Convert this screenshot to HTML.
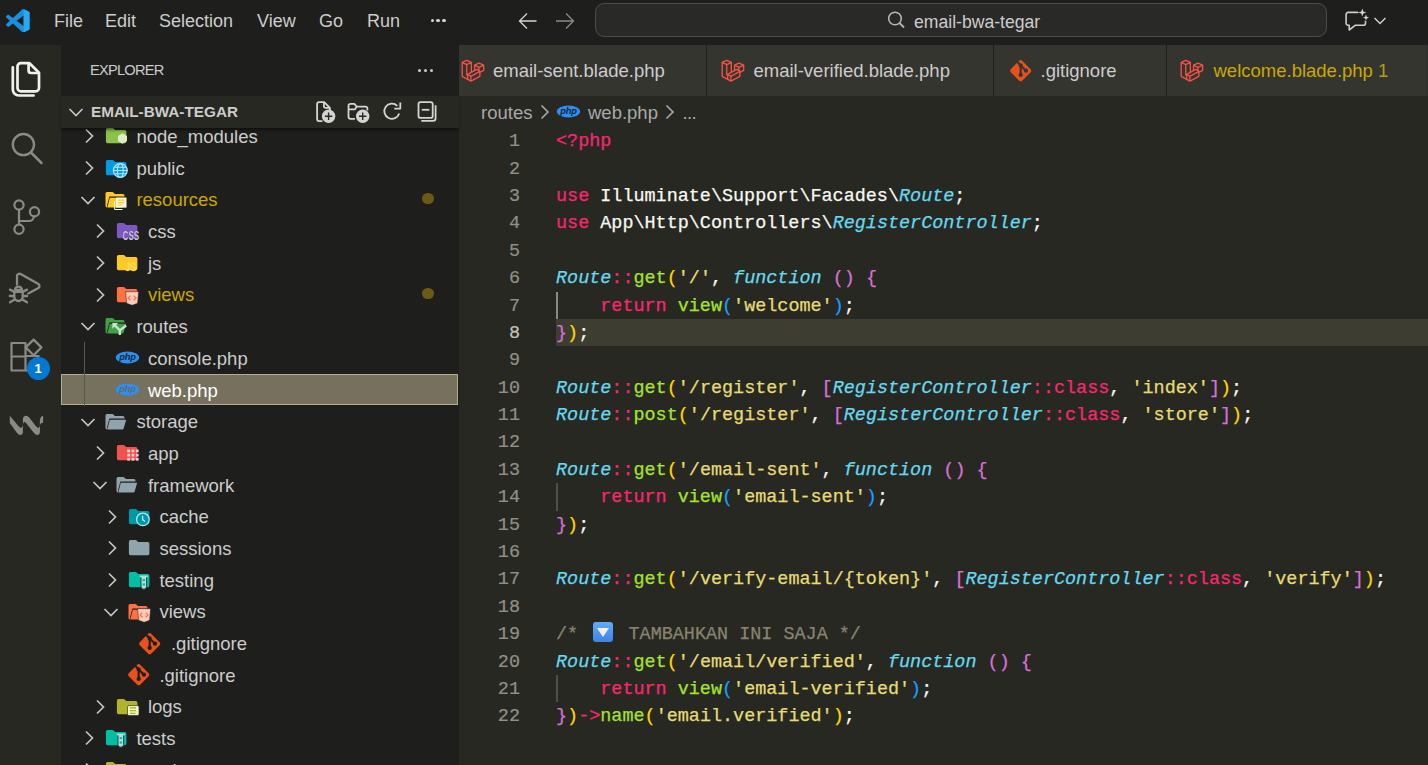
<!DOCTYPE html><html><head><meta charset="utf-8"><style>
*{margin:0;padding:0;box-sizing:border-box}
html,body{width:1428px;height:765px;overflow:hidden;background:#272822;font-family:"Liberation Sans",sans-serif;position:relative}
.abs{position:absolute}
.t{position:absolute;white-space:nowrap}
.menu{position:absolute;top:0;height:45px;line-height:43px;font-size:18px;color:#cccccc;white-space:nowrap}
.ln{position:absolute;left:459px;width:61px;height:27.38px;line-height:27.38px;padding-top:1px;text-align:right;font-family:"Liberation Mono",monospace;font-size:18.46px;color:#90908a;-webkit-text-stroke:0.2px}
.cl{position:absolute;left:556px;height:27.38px;line-height:27.38px;padding-top:1px;font-family:"Liberation Mono",monospace;font-size:18.46px;color:#f8f8f2;white-space:pre;-webkit-text-stroke:0.25px}
.k{color:#f92672}.f{color:#a6e22e}.s{color:#e6db74}.c{color:#66d9ef;font-style:italic}.cm{color:#88846f}
.b1{color:#ffd700}.b2{color:#da70d6}.b3{color:#179fff}
.act{color:#c2c2bf}
.row{position:absolute;height:31.68px;line-height:31.68px;font-size:18.5px;color:#cccccc;white-space:nowrap}
.tabt{position:absolute;top:45px;height:51px;line-height:51px;font-size:18.5px;color:#cccccc;white-space:nowrap}
.emo{display:inline-block;width:20.6px;height:20px;margin:0 4.3px 0 3.4px;background:linear-gradient(#62acf6,#3d84e4);border-radius:3px;vertical-align:-3px;position:relative}.emo:after{content:'';position:absolute;left:4.3px;top:6px;border-left:6px solid transparent;border-right:6px solid transparent;border-top:9px solid #f4eefc}
</style></head><body>
<div class="abs" style="left:0;top:0;width:1428px;height:45px;background:#1e1f1c"></div>
<div class="abs" style="left:0;top:45px;width:61px;height:720px;background:#272822"></div>
<div class="abs" style="left:61px;top:45px;width:398px;height:720px;background:#1e1f1c"></div>
<div class="abs" style="left:459px;top:45px;width:969px;height:51px;background:#34352f"></div>
<svg class="abs" style="left:6px;top:8.5px" width="23.5" height="23.5" viewBox="0 0 100 100"><path d="M70.9 99.3C72.5 99.9 74.3 99.9 75.9 99.1L96.5 89.2C98.6 88.2 100 86 100 83.6V16.4C100 14 98.6 11.8 96.5 10.8L75.9 0.9C73.8 -0.1 71.3 0.1 69.5 1.4C69.3 1.6 69 1.8 68.8 2.1L29.4 38L12.2 25C10.6 23.8 8.4 23.9 6.9 25.2L1.4 30.3C-0.5 31.9 -0.5 34.8 1.4 36.4L16.2 50L1.4 63.6C-0.5 65.2 -0.5 68.1 1.4 69.7L6.9 74.8C8.4 76.1 10.6 76.2 12.2 75L29.4 62L68.8 97.9C69.4 98.5 70.1 99 70.9 99.3ZM75 27.3L45.1 50L75 72.7V27.3Z" fill="#1a8fe0" fill-rule="evenodd"/><path d="M75.9 0.9L96.5 10.8C98.6 11.8 100 14 100 16.4V83.6C100 86 98.6 88.2 96.5 89.2L75.9 99.1C74.3 99.9 72.5 99.9 70.9 99.3L75 95V5Z" fill="#27a9f3"/></svg>
<span class="menu" style="left:54px">File</span>
<span class="menu" style="left:105px">Edit</span>
<span class="menu" style="left:159px">Selection</span>
<span class="menu" style="left:257px">View</span>
<span class="menu" style="left:319px">Go</span>
<span class="menu" style="left:367px">Run</span>
<div class="abs" style="left:430.5px;top:18.5px;width:16px;height:4px"><span class="abs" style="left:0.0px;top:0;width:3.4px;height:3.4px;border-radius:2px;background:#d4d4d4"></span><span class="abs" style="left:5.9px;top:0;width:3.4px;height:3.4px;border-radius:2px;background:#d4d4d4"></span><span class="abs" style="left:11.8px;top:0;width:3.4px;height:3.4px;border-radius:2px;background:#d4d4d4"></span></div>
<svg class="abs" style="left:518.00px;top:10.50px;overflow:visible" width="20" height="20" viewBox="0 0 20 20"><path d="M1.5 10 H18.5 M9 2.5 L1.5 10 L9 17.5" fill="none" stroke="#d4d4d4" stroke-width="1.3"/></svg>
<svg class="abs" style="left:555.00px;top:10.50px;overflow:visible" width="20" height="20" viewBox="0 0 20 20"><path d="M1 10 H18.5 M11 2.5 L18.5 10 L11 17.5" fill="none" stroke="#8a8a8a" stroke-width="1.3"/></svg>
<div class="abs" style="left:595px;top:3px;width:732px;height:34px;border:1px solid #4b4b48;border-radius:9px;background:#292927"></div>
<svg class="abs" style="left:886.00px;top:10.00px;overflow:visible" width="20" height="20" viewBox="0 0 20 20"><circle cx="9" cy="8.5" r="6.3" fill="none" stroke="#b5b5b5" stroke-width="1.6"/><path d="M13.5 13 L18 17.5" stroke="#b5b5b5" stroke-width="1.8"/></svg>
<span class="menu" style="left:914px;font-size:17.6px;line-height:45px">email-bwa-tegar</span>
<svg class="abs" style="left:1344.00px;top:8.00px;overflow:visible" width="28" height="26" viewBox="0 0 28 26"><path d="M14.3 4.4 H4.1 A2 2 0 0 0 2.1 6.4 V15.2 A2 2 0 0 0 4.1 17.2 H5.2 V22 L11.5 17.2 H19.5 A2 2 0 0 0 21.5 15.2 V12.8" fill="none" stroke="#cccccc" stroke-width="1.6" stroke-linejoin="round"/><path d="M18.3 0.4 L19.3 3.5 L22.4 4.5 L19.3 5.5 L18.3 8.6 L17.3 5.5 L14.2 4.5 L17.3 3.5Z M22 6.6 L22.8 8.8 L25 9.6 L22.8 10.4 L22 12.6 L21.2 10.4 L19 9.6 L21.2 8.8Z" fill="#d4d4d4"/></svg>
<svg class="abs" style="left:1373.00px;top:15.80px;overflow:visible" width="14" height="10" viewBox="0 0 14 10"><path d="M1.5 2 L7 7.5 L12.5 2" fill="none" stroke="#cccccc" stroke-width="1.5"/></svg>
<div class="abs" style="left:0;top:45px;width:2px;height:0px;background:#fff"></div>
<svg class="abs" style="left:0.00px;top:50.00px;overflow:visible" width="60" height="60" viewBox="0 0 60 60"><g fill="none" stroke="#f3f2ea" stroke-width="2.7" stroke-linejoin="round"><path d="M17.5 16.5 A3.3 3.3 0 0 1 20.8 13.2 H29.5 L39 22.7 V38 A3.3 3.3 0 0 1 35.7 41.3 H20.8 A3.3 3.3 0 0 1 17.5 38 Z"/><path d="M28.6 13.5 V20.5 A2.5 2.5 0 0 0 31.1 23 H38.6"/><path d="M12.8 17.3 V39.5 A6 6 0 0 0 18.8 45.5 H33.6" stroke-linecap="round"/></g></svg>
<svg class="abs" style="left:8.00px;top:128.00px;overflow:visible" width="40" height="40" viewBox="0 0 40 40"><circle cx="15.4" cy="16.6" r="10.6" fill="none" stroke="#8b8a84" stroke-width="2.3"/><path d="M23 24.5 L33.5 35" stroke="#8b8a84" stroke-width="2.5" stroke-linecap="round"/></svg>
<svg class="abs" style="left:8.00px;top:195.00px;overflow:visible" width="40" height="42" viewBox="0 0 40 42"><circle cx="11" cy="10" r="4.6" fill="none" stroke="#8b8a84" stroke-width="2.2"/><circle cx="11" cy="34.3" r="4.6" fill="none" stroke="#8b8a84" stroke-width="2.2"/><circle cx="26.5" cy="16.8" r="4.6" fill="none" stroke="#8b8a84" stroke-width="2.2"/><path d="M11 14.6 V29.7 M11 26 H21 A5 5 0 0 0 26 21.3" fill="none" stroke="#8b8a84" stroke-width="2.2"/></svg>
<svg class="abs" style="left:0.00px;top:260.00px;overflow:visible" width="60" height="60" viewBox="0 0 60 60"><g fill="none" stroke="#8b8a84" stroke-width="2.3" stroke-linejoin="round" stroke-linecap="round"><path d="M17 24.5 V16.2 A2.5 2.5 0 0 1 20.7 14 L38.4 24 A2.3 2.3 0 0 1 38.4 27.9 L28.2 33.4"/><path d="M14.3 31.8 V36.6 A4.2 4.4 0 0 0 22.7 36.6 V31.8 Z"/><path d="M15 29.8 A3.5 3.2 0 0 1 22 29.8 Z"/><path d="M10 29.6 L14 31.6 M9.8 36 H14 M10 42.3 L14.2 39.8 M27 29.6 L23 31.6 M27.2 36 H23 M27 42.3 L22.8 39.8"/></g></svg>
<svg class="abs" style="left:8.00px;top:336.00px;overflow:visible" width="40" height="40" viewBox="0 0 40 40"><path d="M3.5 7 H17.5 V20 H30.5 V34.5 H3.5 Z M3.5 20.5 H17.5 V34.5" fill="none" stroke="#8b8a84" stroke-width="2.2" stroke-linejoin="round"/><path d="M25.6 3.6 L33.4 11.4 L25.6 19.2 L17.8 11.4 Z" fill="none" stroke="#8b8a84" stroke-width="2.2" stroke-linejoin="round"/></svg>
<div class="abs" style="left:26.5px;top:356.5px;width:23px;height:23px;border-radius:50%;background:#0078d4;color:#fff;font-weight:bold;font-size:13px;line-height:23px;text-align:center">1</div>
<svg class="abs" style="left:0.00px;top:400.00px;overflow:visible" width="60" height="50" viewBox="0 0 60 50"><path d="M9.8 15.7 L18.6 26.2 Q20.6 28.4 21.6 27.6 Q22.9 26.6 22.9 24.5 V19.5 Q22.9 15.7 26 15.7 Q27.8 15.7 29.2 17.6 L36 26.2 Q38 28.4 39 27.6 Q39.9 26.8 39.9 24.5 V20.5 Q40.2 16.5 43.1 15.7 V22.5 Q39.9 23.2 39.9 26.5 V31.5 Q39.9 35 37.2 35 Q35.6 35 34 33 L26.2 23.2 Q24.6 21.3 23.9 22.2 Q22.9 23.2 22.9 25.5 V31.5 Q22.9 35 20.3 35 Q18.6 35 17 33 L9.8 23 Z" fill="#8b8a84"/></svg>
<span class="t" style="left:90px;top:45px;height:51px;line-height:51px;font-size:14.6px;letter-spacing:-0.75px;color:#cccccc">EXPLORER</span>
<div class="abs" style="left:418px;top:69px;width:16px;height:4px"><span class="abs" style="left:0px;top:0;width:3px;height:3px;border-radius:2px;background:#cccccc"></span><span class="abs" style="left:6px;top:0;width:3px;height:3px;border-radius:2px;background:#cccccc"></span><span class="abs" style="left:12px;top:0;width:3px;height:3px;border-radius:2px;background:#cccccc"></span></div>
<div class="abs" style="left:61px;top:373.80px;width:397px;height:31.2px;background:#75715e;border:1px solid #b3ad8e"></div>
<div class="abs" style="left:84px;top:342.32px;width:1px;height:63.36px;background:#585752"></div>
<svg class="abs" style="left:82.60px;top:128.40px;overflow:visible" width="12" height="16" viewBox="0 0 12 16"><path d="M3 1.5 L9.5 8 L3 14.5" fill="none" stroke="#c5c5c5" stroke-width="1.7"/></svg>
<svg class="abs" style="left:103.60px;top:124.40px;overflow:visible" width="24" height="24" viewBox="0 0 24 24"><path d="M1.9 5.7a1.6 1.6 0 0 1 1.6-1.6h5.1a1.4 1.4 0 0 1 1 .4l1.6 1.6h9.6a1.6 1.6 0 0 1 1.6 1.6v9.9a1.6 1.6 0 0 1-1.6 1.6H3.5a1.6 1.6 0 0 1-1.6-1.6z" fill="#8bc34a"/><path d="M18.5 9.3 L23 11.9 V17.1 L18.5 19.7 L14 17.1 V11.9Z" fill="#dcedc8"/></svg>
<span class="row" style="left:136.40px;top:121.06px;color:#cccccc">node_modules</span>
<svg class="abs" style="left:82.60px;top:160.08px;overflow:visible" width="12" height="16" viewBox="0 0 12 16"><path d="M3 1.5 L9.5 8 L3 14.5" fill="none" stroke="#c5c5c5" stroke-width="1.7"/></svg>
<svg class="abs" style="left:103.60px;top:156.08px;overflow:visible" width="24" height="24" viewBox="0 0 24 24"><path d="M1.9 5.7a1.6 1.6 0 0 1 1.6-1.6h5.1a1.4 1.4 0 0 1 1 .4l1.6 1.6h9.6a1.6 1.6 0 0 1 1.6 1.6v9.9a1.6 1.6 0 0 1-1.6 1.6H3.5a1.6 1.6 0 0 1-1.6-1.6z" fill="#039be5"/><circle cx="16.3" cy="14.5" r="6.9" fill="#039be5" stroke="#b3e5fc" stroke-width="1.3"/><ellipse cx="16.3" cy="14.5" rx="2.9" ry="6.9" fill="none" stroke="#b3e5fc" stroke-width="1.1"/><path d="M9.4 14.5 H23.2 M10.2 11.2 H22.4 M10.2 17.8 H22.4" stroke="#b3e5fc" stroke-width="1.1"/></svg>
<span class="row" style="left:136.40px;top:152.74px;color:#cccccc">public</span>
<svg class="abs" style="left:80.10px;top:193.76px;overflow:visible" width="16" height="12" viewBox="0 0 16 12"><path d="M1.5 3 L8 9.5 L14.5 3" fill="none" stroke="#c5c5c5" stroke-width="1.7"/></svg>
<svg class="abs" style="left:103.60px;top:187.76px;overflow:visible" width="24" height="24" viewBox="0 0 24 24"><path d="M3.1 19.4a1.6 1.6 0 0 1-1.6-1.6V5.6A1.6 1.6 0 0 1 3.1 4h5.2a1.4 1.4 0 0 1 1 .4L10.9 6h8a1.6 1.6 0 0 1 1.6 1.6V8.6H5.4L3.1 17V7.8z" fill="#ffca28"/><path d="M5.8 9.8h16.4l-2.5 8.4a1.6 1.6 0 0 1-1.5 1.2H3.3z" fill="#ffca28"/><rect x="12" y="9.6" width="10.5" height="10" fill="#fff8e1"/><path d="M14 12.2 H20.5 M14 14.6 H20.5 M14 17 H18.5" stroke="#ffca28" stroke-width="1.2"/><path d="M10.6 13 V21.5 H18.5" stroke="#fff8e1" stroke-width="1" fill="none"/></svg>
<span class="row" style="left:136.40px;top:184.42px;color:#cca700">resources</span>
<span class="abs" style="left:422.3px;top:192.86px;width:11.5px;height:11.5px;border-radius:50%;background:#6b5a17"></span>
<svg class="abs" style="left:94.12px;top:223.44px;overflow:visible" width="12" height="16" viewBox="0 0 12 16"><path d="M3 1.5 L9.5 8 L3 14.5" fill="none" stroke="#c5c5c5" stroke-width="1.7"/></svg>
<svg class="abs" style="left:115.12px;top:219.44px;overflow:visible" width="24" height="24" viewBox="0 0 24 24"><path d="M1.9 5.7a1.6 1.6 0 0 1 1.6-1.6h5.1a1.4 1.4 0 0 1 1 .4l1.6 1.6h9.6a1.6 1.6 0 0 1 1.6 1.6v9.9a1.6 1.6 0 0 1-1.6 1.6H3.5a1.6 1.6 0 0 1-1.6-1.6z" fill="#7e57c2"/><text x="7.6" y="20.6" font-family="Liberation Sans" font-weight="bold" font-size="12.4" fill="#d1c4e9" textLength="16.5" lengthAdjust="spacingAndGlyphs" stroke="#1e1f1c" stroke-width="0.6" paint-order="stroke">CSS</text></svg>
<span class="row" style="left:147.92px;top:216.10px;color:#cccccc">css</span>
<svg class="abs" style="left:94.12px;top:255.12px;overflow:visible" width="12" height="16" viewBox="0 0 12 16"><path d="M3 1.5 L9.5 8 L3 14.5" fill="none" stroke="#c5c5c5" stroke-width="1.7"/></svg>
<svg class="abs" style="left:115.12px;top:251.12px;overflow:visible" width="24" height="24" viewBox="0 0 24 24"><path d="M1.9 5.7a1.6 1.6 0 0 1 1.6-1.6h5.1a1.4 1.4 0 0 1 1 .4l1.6 1.6h9.6a1.6 1.6 0 0 1 1.6 1.6v9.9a1.6 1.6 0 0 1-1.6 1.6H3.5a1.6 1.6 0 0 1-1.6-1.6z" fill="#ffca28"/><text x="10.4" y="19.6" font-family="Liberation Sans" font-size="10.5" fill="#fff59d" textLength="11" lengthAdjust="spacingAndGlyphs" stroke="#ffca28" stroke-width="0.3">JS</text></svg>
<span class="row" style="left:147.92px;top:247.78px;color:#cccccc">js</span>
<svg class="abs" style="left:94.12px;top:286.80px;overflow:visible" width="12" height="16" viewBox="0 0 12 16"><path d="M3 1.5 L9.5 8 L3 14.5" fill="none" stroke="#c5c5c5" stroke-width="1.7"/></svg>
<svg class="abs" style="left:115.12px;top:282.80px;overflow:visible" width="24" height="24" viewBox="0 0 24 24"><path d="M1.9 5.7a1.6 1.6 0 0 1 1.6-1.6h5.1a1.4 1.4 0 0 1 1 .4l1.6 1.6h9.6a1.6 1.6 0 0 1 1.6 1.6v9.9a1.6 1.6 0 0 1-1.6 1.6H3.5a1.6 1.6 0 0 1-1.6-1.6z" fill="#ff7043"/><path d="M10.6 8.7 H23.6 L22.6 20.3 L17.1 22.3 L11.6 20.3 Z" fill="#ffccbc" stroke="#1e1f1c" stroke-width="0.5"/><path d="M15.4 12.6 L13.2 14.9 L15.4 17.2 M18.8 12.6 L21 14.9 L18.8 17.2" stroke="#ff7043" stroke-width="1.3" fill="none"/></svg>
<span class="row" style="left:147.92px;top:279.46px;color:#cca700">views</span>
<span class="abs" style="left:422.3px;top:287.90px;width:11.5px;height:11.5px;border-radius:50%;background:#6b5a17"></span>
<svg class="abs" style="left:80.10px;top:320.48px;overflow:visible" width="16" height="12" viewBox="0 0 16 12"><path d="M1.5 3 L8 9.5 L14.5 3" fill="none" stroke="#c5c5c5" stroke-width="1.7"/></svg>
<svg class="abs" style="left:103.60px;top:314.48px;overflow:visible" width="24" height="24" viewBox="0 0 24 24"><path d="M3.1 19.4a1.6 1.6 0 0 1-1.6-1.6V5.6A1.6 1.6 0 0 1 3.1 4h5.2a1.4 1.4 0 0 1 1 .4L10.9 6h8a1.6 1.6 0 0 1 1.6 1.6V8.6H5.4L3.1 17V7.8z" fill="#43a047"/><path d="M5.8 9.8h16.4l-2.5 8.4a1.6 1.6 0 0 1-1.5 1.2H3.3z" fill="#43a047"/><path d="M10.8 11.3 L15.8 16.2 V21 M15.8 16.2 L22.2 11.6" stroke="#c8e6c9" stroke-width="2.4" fill="none"/><path d="M8.4 8.9 H14.2 L8.4 14.7 Z" fill="#c8e6c9"/></svg>
<span class="row" style="left:136.40px;top:311.14px;color:#cccccc">routes</span>
<svg class="abs" style="left:116.12px;top:346.16px;overflow:visible" width="24" height="24" viewBox="0 0 24 24"><ellipse cx="11.5" cy="11.5" rx="11.65" ry="5.9" fill="#2d8ff0"/>
<text x="11.4" y="14.1" text-anchor="middle" font-family="Liberation Sans" font-style="italic" font-weight="bold" font-size="9.3" fill="#15273c" letter-spacing="-0.2">php</text></svg>
<span class="row" style="left:147.92px;top:342.82px;color:#cccccc">console.php</span>
<svg class="abs" style="left:116.12px;top:377.84px;overflow:visible" width="24" height="24" viewBox="0 0 24 24"><ellipse cx="11.5" cy="11.5" rx="11.65" ry="5.9" fill="#2d8ff0"/>
<text x="11.4" y="14.1" text-anchor="middle" font-family="Liberation Sans" font-style="italic" font-weight="bold" font-size="9.3" fill="#5f6a78" letter-spacing="-0.2">php</text></svg>
<span class="row" style="left:147.92px;top:374.50px;color:#ffffff">web.php</span>
<svg class="abs" style="left:80.10px;top:415.52px;overflow:visible" width="16" height="12" viewBox="0 0 16 12"><path d="M1.5 3 L8 9.5 L14.5 3" fill="none" stroke="#c5c5c5" stroke-width="1.7"/></svg>
<svg class="abs" style="left:103.60px;top:409.52px;overflow:visible" width="24" height="24" viewBox="0 0 24 24"><path d="M3.1 19.4a1.6 1.6 0 0 1-1.6-1.6V5.6A1.6 1.6 0 0 1 3.1 4h5.2a1.4 1.4 0 0 1 1 .4L10.9 6h8a1.6 1.6 0 0 1 1.6 1.6V8.6H5.4L3.1 17V7.8z" fill="#90a4ae"/><path d="M5.8 9.8h16.4l-2.5 8.4a1.6 1.6 0 0 1-1.5 1.2H3.3z" fill="#90a4ae"/></svg>
<span class="row" style="left:136.40px;top:406.18px;color:#cccccc">storage</span>
<svg class="abs" style="left:94.12px;top:445.20px;overflow:visible" width="12" height="16" viewBox="0 0 12 16"><path d="M3 1.5 L9.5 8 L3 14.5" fill="none" stroke="#c5c5c5" stroke-width="1.7"/></svg>
<svg class="abs" style="left:115.12px;top:441.20px;overflow:visible" width="24" height="24" viewBox="0 0 24 24"><path d="M1.9 5.7a1.6 1.6 0 0 1 1.6-1.6h5.1a1.4 1.4 0 0 1 1 .4l1.6 1.6h9.6a1.6 1.6 0 0 1 1.6 1.6v9.9a1.6 1.6 0 0 1-1.6 1.6H3.5a1.6 1.6 0 0 1-1.6-1.6z" fill="#ef5350"/><rect x="12.3" y="8.6" width="2.7" height="2.7" fill="#ffcdd2"/><rect x="16.6" y="8.6" width="2.7" height="2.7" fill="#ffcdd2"/><rect x="20.9" y="8.6" width="2.7" height="2.7" fill="#ffcdd2"/><rect x="12.3" y="12.8" width="2.7" height="2.7" fill="#ffcdd2"/><rect x="16.6" y="12.8" width="2.7" height="2.7" fill="#ffcdd2"/><rect x="20.9" y="12.8" width="2.7" height="2.7" fill="#ffcdd2"/><rect x="12.3" y="16.9" width="2.7" height="2.7" fill="#ffcdd2"/><rect x="16.6" y="16.9" width="2.7" height="2.7" fill="#ffcdd2"/><rect x="20.9" y="16.9" width="2.7" height="2.7" fill="#ffcdd2"/></svg>
<span class="row" style="left:147.92px;top:437.86px;color:#cccccc">app</span>
<svg class="abs" style="left:91.62px;top:478.88px;overflow:visible" width="16" height="12" viewBox="0 0 16 12"><path d="M1.5 3 L8 9.5 L14.5 3" fill="none" stroke="#c5c5c5" stroke-width="1.7"/></svg>
<svg class="abs" style="left:115.12px;top:472.88px;overflow:visible" width="24" height="24" viewBox="0 0 24 24"><path d="M3.1 19.4a1.6 1.6 0 0 1-1.6-1.6V5.6A1.6 1.6 0 0 1 3.1 4h5.2a1.4 1.4 0 0 1 1 .4L10.9 6h8a1.6 1.6 0 0 1 1.6 1.6V8.6H5.4L3.1 17V7.8z" fill="#90a4ae"/><path d="M5.8 9.8h16.4l-2.5 8.4a1.6 1.6 0 0 1-1.5 1.2H3.3z" fill="#90a4ae"/></svg>
<span class="row" style="left:147.92px;top:469.54px;color:#cccccc">framework</span>
<svg class="abs" style="left:105.64px;top:508.56px;overflow:visible" width="12" height="16" viewBox="0 0 12 16"><path d="M3 1.5 L9.5 8 L3 14.5" fill="none" stroke="#c5c5c5" stroke-width="1.7"/></svg>
<svg class="abs" style="left:126.64px;top:504.56px;overflow:visible" width="24" height="24" viewBox="0 0 24 24"><path d="M1.9 5.7a1.6 1.6 0 0 1 1.6-1.6h5.1a1.4 1.4 0 0 1 1 .4l1.6 1.6h9.6a1.6 1.6 0 0 1 1.6 1.6v9.9a1.6 1.6 0 0 1-1.6 1.6H3.5a1.6 1.6 0 0 1-1.6-1.6z" fill="#0097a7"/><circle cx="15.9" cy="14.4" r="6.3" fill="#0097a7" stroke="#b2ebf2" stroke-width="1.3"/><path d="M15.6 10.8 V14.6 L18 16.6" stroke="#b2ebf2" stroke-width="1.3" fill="none"/></svg>
<span class="row" style="left:159.44px;top:501.22px;color:#cccccc">cache</span>
<svg class="abs" style="left:105.64px;top:540.24px;overflow:visible" width="12" height="16" viewBox="0 0 12 16"><path d="M3 1.5 L9.5 8 L3 14.5" fill="none" stroke="#c5c5c5" stroke-width="1.7"/></svg>
<svg class="abs" style="left:126.64px;top:536.24px;overflow:visible" width="24" height="24" viewBox="0 0 24 24"><path d="M1.9 5.7a1.6 1.6 0 0 1 1.6-1.6h5.1a1.4 1.4 0 0 1 1 .4l1.6 1.6h9.6a1.6 1.6 0 0 1 1.6 1.6v9.9a1.6 1.6 0 0 1-1.6 1.6H3.5a1.6 1.6 0 0 1-1.6-1.6z" fill="#90a4ae"/></svg>
<span class="row" style="left:159.44px;top:532.90px;color:#cccccc">sessions</span>
<svg class="abs" style="left:105.64px;top:571.92px;overflow:visible" width="12" height="16" viewBox="0 0 12 16"><path d="M3 1.5 L9.5 8 L3 14.5" fill="none" stroke="#c5c5c5" stroke-width="1.7"/></svg>
<svg class="abs" style="left:126.64px;top:567.92px;overflow:visible" width="24" height="24" viewBox="0 0 24 24"><path d="M1.9 5.7a1.6 1.6 0 0 1 1.6-1.6h5.1a1.4 1.4 0 0 1 1 .4l1.6 1.6h9.6a1.6 1.6 0 0 1 1.6 1.6v9.9a1.6 1.6 0 0 1-1.6 1.6H3.5a1.6 1.6 0 0 1-1.6-1.6z" fill="#00bfa5"/><path d="M14 8.4 H19.6 V18.4 A2.8 2.8 0 0 1 14 18.4 Z" fill="#b2dfdb" stroke="#1e1f1c" stroke-width="0.8"/><path d="M12.8 8.4 H20.8" stroke="#b2dfdb" stroke-width="1.8"/><rect x="15.6" y="11" width="2.4" height="2.2" fill="#00bfa5"/><rect x="15.6" y="15.4" width="2.4" height="2.2" fill="#00bfa5"/></svg>
<span class="row" style="left:159.44px;top:564.58px;color:#cccccc">testing</span>
<svg class="abs" style="left:103.14px;top:605.60px;overflow:visible" width="16" height="12" viewBox="0 0 16 12"><path d="M1.5 3 L8 9.5 L14.5 3" fill="none" stroke="#c5c5c5" stroke-width="1.7"/></svg>
<svg class="abs" style="left:126.64px;top:599.60px;overflow:visible" width="24" height="24" viewBox="0 0 24 24"><path d="M3.1 19.4a1.6 1.6 0 0 1-1.6-1.6V5.6A1.6 1.6 0 0 1 3.1 4h5.2a1.4 1.4 0 0 1 1 .4L10.9 6h8a1.6 1.6 0 0 1 1.6 1.6V8.6H5.4L3.1 17V7.8z" fill="#ff7043"/><path d="M5.8 9.8h16.4l-2.5 8.4a1.6 1.6 0 0 1-1.5 1.2H3.3z" fill="#ff7043"/><path d="M10.6 8.7 H23.6 L22.6 20.3 L17.1 22.3 L11.6 20.3 Z" fill="#ffccbc" stroke="#1e1f1c" stroke-width="0.5"/><path d="M15.4 12.6 L13.2 14.9 L15.4 17.2 M18.8 12.6 L21 14.9 L18.8 17.2" stroke="#ff7043" stroke-width="1.3" fill="none"/></svg>
<span class="row" style="left:159.44px;top:596.26px;color:#cccccc">views</span>
<svg class="abs" style="left:137.46px;top:630.58px;overflow:visible" width="25.4" height="25.4" viewBox="0 0 24 24"><path d="M2.6 10.59L8.38 4.8l1.69 1.7c-.24.85.15 1.78.93 2.23v5.54c-.6.34-1 .99-1 1.73a2 2 0 0 0 2 2a2 2 0 0 0 2-2c0-.74-.4-1.39-1-1.73V9.41l2.07 2.09c-.07.15-.07.32-.07.5a2 2 0 0 0 2 2a2 2 0 0 0 2-2a2 2 0 0 0-2-2c-.18 0-.35 0-.5.07L13.93 7.5a1.98 1.98 0 0 0-1.15-2.34c-.43-.16-.88-.2-1.28-.09L9.8 3.38l.79-.78c.78-.79 2.04-.79 2.82 0l7.99 7.99c.79.78.79 2.04 0 2.82l-7.99 7.99c-.78.79-2.04.79-2.82 0L2.6 13.41c-.79-.78-.79-2.04 0-2.82Z" fill="#e8501c"/></svg>
<span class="row" style="left:170.96px;top:627.94px;color:#cccccc">.gitignore</span>
<svg class="abs" style="left:125.94px;top:662.26px;overflow:visible" width="25.4" height="25.4" viewBox="0 0 24 24"><path d="M2.6 10.59L8.38 4.8l1.69 1.7c-.24.85.15 1.78.93 2.23v5.54c-.6.34-1 .99-1 1.73a2 2 0 0 0 2 2a2 2 0 0 0 2-2c0-.74-.4-1.39-1-1.73V9.41l2.07 2.09c-.07.15-.07.32-.07.5a2 2 0 0 0 2 2a2 2 0 0 0 2-2a2 2 0 0 0-2-2c-.18 0-.35 0-.5.07L13.93 7.5a1.98 1.98 0 0 0-1.15-2.34c-.43-.16-.88-.2-1.28-.09L9.8 3.38l.79-.78c.78-.79 2.04-.79 2.82 0l7.99 7.99c.79.78.79 2.04 0 2.82l-7.99 7.99c-.78.79-2.04.79-2.82 0L2.6 13.41c-.79-.78-.79-2.04 0-2.82Z" fill="#e8501c"/></svg>
<span class="row" style="left:159.44px;top:659.62px;color:#cccccc">.gitignore</span>
<svg class="abs" style="left:94.12px;top:698.64px;overflow:visible" width="12" height="16" viewBox="0 0 12 16"><path d="M3 1.5 L9.5 8 L3 14.5" fill="none" stroke="#c5c5c5" stroke-width="1.7"/></svg>
<svg class="abs" style="left:115.12px;top:694.64px;overflow:visible" width="24" height="24" viewBox="0 0 24 24"><path d="M1.9 5.7a1.6 1.6 0 0 1 1.6-1.6h5.1a1.4 1.4 0 0 1 1 .4l1.6 1.6h9.6a1.6 1.6 0 0 1 1.6 1.6v9.9a1.6 1.6 0 0 1-1.6 1.6H3.5a1.6 1.6 0 0 1-1.6-1.6z" fill="#afb42b"/><rect x="12.5" y="10.5" width="11.5" height="10.1" rx="1.5" fill="#f0f4c3" stroke="#1e1f1c" stroke-width="0.6"/><path d="M15 12.8 H21 M15 15.6 H21 M15 18.4 H20.5" stroke="#afb42b" stroke-width="1.4"/></svg>
<span class="row" style="left:147.92px;top:691.30px;color:#cccccc">logs</span>
<svg class="abs" style="left:82.60px;top:730.32px;overflow:visible" width="12" height="16" viewBox="0 0 12 16"><path d="M3 1.5 L9.5 8 L3 14.5" fill="none" stroke="#c5c5c5" stroke-width="1.7"/></svg>
<svg class="abs" style="left:103.60px;top:726.32px;overflow:visible" width="24" height="24" viewBox="0 0 24 24"><path d="M1.9 5.7a1.6 1.6 0 0 1 1.6-1.6h5.1a1.4 1.4 0 0 1 1 .4l1.6 1.6h9.6a1.6 1.6 0 0 1 1.6 1.6v9.9a1.6 1.6 0 0 1-1.6 1.6H3.5a1.6 1.6 0 0 1-1.6-1.6z" fill="#00bfa5"/><path d="M14 8.4 H19.6 V18.4 A2.8 2.8 0 0 1 14 18.4 Z" fill="#b2dfdb" stroke="#1e1f1c" stroke-width="0.8"/><path d="M12.8 8.4 H20.8" stroke="#b2dfdb" stroke-width="1.8"/><rect x="15.6" y="11" width="2.4" height="2.2" fill="#00bfa5"/><rect x="15.6" y="15.4" width="2.4" height="2.2" fill="#00bfa5"/></svg>
<span class="row" style="left:136.40px;top:722.98px;color:#cccccc">tests</span>
<svg class="abs" style="left:82.60px;top:762.00px;overflow:visible" width="12" height="16" viewBox="0 0 12 16"><path d="M3 1.5 L9.5 8 L3 14.5" fill="none" stroke="#c5c5c5" stroke-width="1.7"/></svg>
<svg class="abs" style="left:103.60px;top:758.00px;overflow:visible" width="24" height="24" viewBox="0 0 24 24"><path d="M1.9 5.7a1.6 1.6 0 0 1 1.6-1.6h5.1a1.4 1.4 0 0 1 1 .4l1.6 1.6h9.6a1.6 1.6 0 0 1 1.6 1.6v9.9a1.6 1.6 0 0 1-1.6 1.6H3.5a1.6 1.6 0 0 1-1.6-1.6z" fill="#afb42b"/></svg>
<span class="row" style="left:136.40px;top:754.66px;color:#cccccc">vendor</span>
<div class="abs" style="left:61px;top:96px;width:398px;height:31.7px;background:#272822;box-shadow:0 3px 3px -1px rgba(0,0,0,0.5)"></div>
<svg class="abs" style="left:67.50px;top:106.00px;overflow:visible" width="16" height="12" viewBox="0 0 16 12"><path d="M1.5 3 L8 9.5 L14.5 3" fill="none" stroke="#c5c5c5" stroke-width="1.7"/></svg>
<span class="t" style="left:91px;top:96px;height:31.7px;line-height:31.7px;font-size:15.3px;font-weight:bold;color:#cccccc">EMAIL-BWA-TEGAR</span>
<svg class="abs" style="left:300.00px;top:90.00px;overflow:visible" width="160" height="45" viewBox="0 0 160 45"><g fill="none" stroke="#d4d4d4" stroke-width="1.8" stroke-linejoin="round"><path d="M22.5 31.1 H19.1 A2 2 0 0 1 17.1 29.1 V14.1 A2 2 0 0 1 19.1 12.1 H24.2 L29.9 17.8 V20"/><path d="M23.9 12.3 V16.2 A1.6 1.6 0 0 0 25.5 17.8 H29.7"/><path d="M55 28.8 H50.5 A2 2 0 0 1 48.5 26.8 V15.8 A2 2 0 0 1 50.5 13.8 H54.3 L56.8 16.6 H65.4 A2 2 0 0 1 67.4 18.6 V20.5 M48.5 19.3 H55 L56.8 16.6"/><path d="M99.2 23.4 A7.6 7.6 0 1 1 97.3 15.8"/><path d="M100.3 12.6 V18.6 H94.3"/><rect x="118.5" y="12.1" width="14.2" height="15.8" rx="2"/><path d="M121.8 19.8 H129.4"/><path d="M135.6 15.3 V28.3 A2.6 2.6 0 0 1 133 30.9 H121.3"/></g><circle cx="28.6" cy="26.3" r="6.7" fill="#d4d4d4"/><circle cx="62.7" cy="26.3" r="6.7" fill="#d4d4d4"/><path d="M28.6 22.6 V30 M24.9 26.3 H32.3 M62.7 22.6 V30 M59 26.3 H66.4" stroke="#272822" stroke-width="1.4"/></svg>
<div class="abs" style="left:706px;top:45px;width:1px;height:51px;background:#1e1f1c"></div>
<div class="abs" style="left:993px;top:45px;width:1px;height:51px;background:#1e1f1c"></div>
<div class="abs" style="left:1166px;top:45px;width:1px;height:51px;background:#1e1f1c"></div>
<div class="abs" style="left:1427px;top:45px;width:1px;height:51px;background:#2f302b"></div>
<svg class="abs" style="left:457.50px;top:54.50px;overflow:visible" width="32" height="32" viewBox="0 0 32 32"><g fill="none" stroke="#f55247" stroke-width="1.4" stroke-linejoin="round" stroke-linecap="round" transform="translate(4.2 5.4) scale(0.95 0.98) translate(-4.2 -5.4)">
<path d="M4.2 7.5 L9 5.4 L13.8 7.5 L9 9.6 Z M4.2 7.5 V21.7 L13.4 26.5 L22.8 21.7 V16.5 M9 9.6 V20.2 M13.8 7.5 V17.4 M10 19.7 L19.5 14.6 L22.8 16.5 L13.3 21.6 Z M13.3 21.6 V26.5 M10 19.7 V24.4 M17.2 10.3 L21.8 8.2 L26.8 10.3 L21.8 12.4 Z M17.2 10.3 V15.6 M26.8 10.3 V15.5 L22.8 17.6 M21.8 12.4 V17.2"/>
</g></svg>
<span class="tabt" style="left:493px">email-sent.blade.php</span>
<svg class="abs" style="left:718.00px;top:54.50px;overflow:visible" width="32" height="32" viewBox="0 0 32 32"><g fill="none" stroke="#f55247" stroke-width="1.4" stroke-linejoin="round" stroke-linecap="round" transform="translate(4.2 5.4) scale(0.95 0.98) translate(-4.2 -5.4)">
<path d="M4.2 7.5 L9 5.4 L13.8 7.5 L9 9.6 Z M4.2 7.5 V21.7 L13.4 26.5 L22.8 21.7 V16.5 M9 9.6 V20.2 M13.8 7.5 V17.4 M10 19.7 L19.5 14.6 L22.8 16.5 L13.3 21.6 Z M13.3 21.6 V26.5 M10 19.7 V24.4 M17.2 10.3 L21.8 8.2 L26.8 10.3 L21.8 12.4 Z M17.2 10.3 V15.6 M26.8 10.3 V15.5 L22.8 17.6 M21.8 12.4 V17.2"/>
</g></svg>
<span class="tabt" style="left:753.5px">email-verified.blade.php</span>
<svg class="abs" style="left:1007.90px;top:57.60px;overflow:visible" width="25.4" height="25.4" viewBox="0 0 24 24"><path d="M2.6 10.59L8.38 4.8l1.69 1.7c-.24.85.15 1.78.93 2.23v5.54c-.6.34-1 .99-1 1.73a2 2 0 0 0 2 2a2 2 0 0 0 2-2c0-.74-.4-1.39-1-1.73V9.41l2.07 2.09c-.07.15-.07.32-.07.5a2 2 0 0 0 2 2a2 2 0 0 0 2-2a2 2 0 0 0-2-2c-.18 0-.35 0-.5.07L13.93 7.5a1.98 1.98 0 0 0-1.15-2.34c-.43-.16-.88-.2-1.28-.09L9.8 3.38l.79-.78c.78-.79 2.04-.79 2.82 0l7.99 7.99c.79.78.79 2.04 0 2.82l-7.99 7.99c-.78.79-2.04.79-2.82 0L2.6 13.41c-.79-.78-.79-2.04 0-2.82Z" fill="#e8501c"/></svg>
<span class="tabt" style="left:1040.5px">.gitignore</span>
<svg class="abs" style="left:1177.00px;top:54.50px;overflow:visible" width="32" height="32" viewBox="0 0 32 32"><g fill="none" stroke="#f55247" stroke-width="1.4" stroke-linejoin="round" stroke-linecap="round" transform="translate(4.2 5.4) scale(0.95 0.98) translate(-4.2 -5.4)">
<path d="M4.2 7.5 L9 5.4 L13.8 7.5 L9 9.6 Z M4.2 7.5 V21.7 L13.4 26.5 L22.8 21.7 V16.5 M9 9.6 V20.2 M13.8 7.5 V17.4 M10 19.7 L19.5 14.6 L22.8 16.5 L13.3 21.6 Z M13.3 21.6 V26.5 M10 19.7 V24.4 M17.2 10.3 L21.8 8.2 L26.8 10.3 L21.8 12.4 Z M17.2 10.3 V15.6 M26.8 10.3 V15.5 L22.8 17.6 M21.8 12.4 V17.2"/>
</g></svg>
<span class="tabt" style="left:1213.5px;color:#cca700">welcome.blade.php <span style="color:#b89b0f">1</span></span>
<span class="t" style="left:481px;top:97px;height:31px;line-height:31px;font-size:18.5px;color:#a9a9a9">routes</span>
<svg class="abs" style="left:539.00px;top:102.50px;overflow:visible" width="12" height="18" viewBox="0 0 12 18"><path d="M2.5 2.5 L9 9 L2.5 15.5" fill="none" stroke="#a9a9a9" stroke-width="1.6"/></svg>
<svg class="abs" style="left:557.20px;top:99.50px;overflow:visible" width="24" height="24" viewBox="0 0 24 24"><ellipse cx="11.5" cy="11.5" rx="11.65" ry="5.9" fill="#2d8ff0"/>
<text x="11.4" y="14.1" text-anchor="middle" font-family="Liberation Sans" font-style="italic" font-weight="bold" font-size="9.3" fill="#15273c" letter-spacing="-0.2">php</text></svg>
<span class="t" style="left:588px;top:97px;height:31px;line-height:31px;font-size:18.5px;color:#a9a9a9">web.php</span>
<svg class="abs" style="left:664.00px;top:102.50px;overflow:visible" width="12" height="18" viewBox="0 0 12 18"><path d="M2.5 2.5 L9 9 L2.5 15.5" fill="none" stroke="#a9a9a9" stroke-width="1.6"/></svg>
<span class="t" style="left:682.5px;top:97px;height:31px;line-height:31px;font-size:18.5px;letter-spacing:-0.6px;color:#a9a9a9">...</span>
<div class="abs" style="left:556px;top:318.96px;width:872px;height:27.38px;background:#3e3d32"></div>
<div class="abs" style="left:556px;top:291.58px;width:1.5px;height:27.38px;background:#8a8a84"></div>
<div class="abs" style="left:556px;top:483.24px;width:1.5px;height:27.38px;background:#4f504a"></div>
<div class="abs" style="left:556px;top:674.90px;width:1.5px;height:27.38px;background:#4f504a"></div>
<div class="ln" style="top:127.30px">1</div>
<div class="cl" style="top:127.30px"><span class="k">&lt;?php</span></div>
<div class="ln" style="top:154.68px">2</div>
<div class="ln" style="top:182.06px">3</div>
<div class="cl" style="top:182.06px"><span class="k">use</span> Illuminate\Support\Facades\<span class="c">Route</span>;</div>
<div class="ln" style="top:209.44px">4</div>
<div class="cl" style="top:209.44px"><span class="k">use</span> App\Http\Controllers\<span class="c">RegisterController</span>;</div>
<div class="ln" style="top:236.82px">5</div>
<div class="ln" style="top:264.20px">6</div>
<div class="cl" style="top:264.20px"><span class="c">Route</span><span class="k">::</span><span class="f">get</span><span class="b1">(</span><span class="s">'/'</span>, <span class="c">function</span> <span class="b2">()</span> <span class="b2">{</span></div>
<div class="ln" style="top:291.58px">7</div>
<div class="cl" style="top:291.58px">    <span class="k">return</span> <span class="f">view</span><span class="b3">(</span><span class="s">'welcome'</span><span class="b3">)</span>;</div>
<div class="ln act" style="top:318.96px">8</div>
<div class="cl" style="top:318.96px"><span class="b2">}</span><span class="b1">)</span>;</div>
<div class="ln" style="top:346.34px">9</div>
<div class="ln" style="top:373.72px">10</div>
<div class="cl" style="top:373.72px"><span class="c">Route</span><span class="k">::</span><span class="f">get</span><span class="b1">(</span><span class="s">'/register'</span>, <span class="b2">[</span><span class="c">RegisterController</span><span class="k">::class</span>, <span class="s">'index'</span><span class="b2">]</span><span class="b1">)</span>;</div>
<div class="ln" style="top:401.10px">11</div>
<div class="cl" style="top:401.10px"><span class="c">Route</span><span class="k">::</span><span class="f">post</span><span class="b1">(</span><span class="s">'/register'</span>, <span class="b2">[</span><span class="c">RegisterController</span><span class="k">::class</span>, <span class="s">'store'</span><span class="b2">]</span><span class="b1">)</span>;</div>
<div class="ln" style="top:428.48px">12</div>
<div class="ln" style="top:455.86px">13</div>
<div class="cl" style="top:455.86px"><span class="c">Route</span><span class="k">::</span><span class="f">get</span><span class="b1">(</span><span class="s">'/email-sent'</span>, <span class="c">function</span> <span class="b2">()</span> <span class="b2">{</span></div>
<div class="ln" style="top:483.24px">14</div>
<div class="cl" style="top:483.24px">    <span class="k">return</span> <span class="f">view</span><span class="b3">(</span><span class="s">'email-sent'</span><span class="b3">)</span>;</div>
<div class="ln" style="top:510.62px">15</div>
<div class="cl" style="top:510.62px"><span class="b2">}</span><span class="b1">)</span>;</div>
<div class="ln" style="top:538.00px">16</div>
<div class="ln" style="top:565.38px">17</div>
<div class="cl" style="top:565.38px"><span class="c">Route</span><span class="k">::</span><span class="f">get</span><span class="b1">(</span><span class="s">'/verify-email/{token}'</span>, <span class="b2">[</span><span class="c">RegisterController</span><span class="k">::class</span>, <span class="s">'verify'</span><span class="b2">]</span><span class="b1">)</span>;</div>
<div class="ln" style="top:592.76px">18</div>
<div class="ln" style="top:620.14px">19</div>
<div class="cl" style="top:620.14px"><span class="cm">/* <span class="emo"></span> TAMBAHKAN INI SAJA */</span></div>
<div class="ln" style="top:647.52px">20</div>
<div class="cl" style="top:647.52px"><span class="c">Route</span><span class="k">::</span><span class="f">get</span><span class="b1">(</span><span class="s">'/email/verified'</span>, <span class="c">function</span> <span class="b2">()</span> <span class="b2">{</span></div>
<div class="ln" style="top:674.90px">21</div>
<div class="cl" style="top:674.90px">    <span class="k">return</span> <span class="f">view</span><span class="b3">(</span><span class="s">'email-verified'</span><span class="b3">)</span>;</div>
<div class="ln" style="top:702.28px">22</div>
<div class="cl" style="top:702.28px"><span class="b2">}</span><span class="b1">)</span><span class="k">-&gt;</span><span class="f">name</span><span class="b1">(</span><span class="s">'email.verified'</span><span class="b1">)</span>;</div>
</body></html>
